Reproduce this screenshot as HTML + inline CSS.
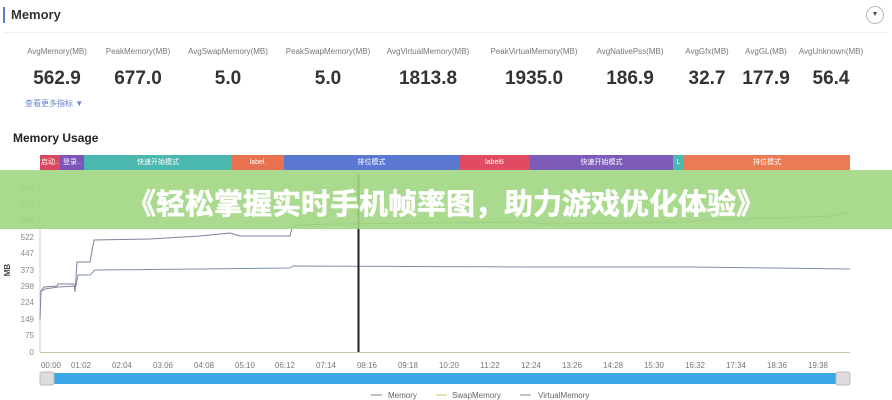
<!DOCTYPE html>
<html><head><meta charset="utf-8"><style>
*{margin:0;padding:0;box-sizing:border-box}
body{width:892px;height:400px;overflow:hidden;background:#fff;font-family:"Liberation Sans","Noto Sans CJK SC",sans-serif;position:relative;color:#333}
.a{position:absolute;white-space:nowrap}
.lab{font-size:8px;color:#777;transform:translateX(-50%);top:47px}
.val{font-size:19px;font-weight:bold;color:#333;transform:translateX(-50%);top:68px}
.seg{position:absolute;top:155px;height:15px;color:#fff;font-size:7px;text-align:center;line-height:15px;overflow:hidden}
</style></head><body>
<div class="a" style="left:3px;top:7px;width:2px;height:16px;background:#5b7bd5"></div>
<div class="a" style="left:11px;top:7px;font-size:13px;font-weight:bold;color:#333">Memory</div>
<div class="a" style="left:4px;top:32px;width:884px;height:1px;background:#eee"></div>
<div class="a" style="left:866px;top:6px;width:18px;height:18px;border:1px solid #bbb;border-radius:50%;font-size:7px;color:#555;text-align:center;line-height:16px">▼</div>

<div class="a lab" style="left:57px">AvgMemory(MB)</div>
<div class="a lab" style="left:138px">PeakMemory(MB)</div>
<div class="a lab" style="left:228px">AvgSwapMemory(MB)</div>
<div class="a lab" style="left:328px">PeakSwapMemory(MB)</div>
<div class="a lab" style="left:428px">AvgVirtualMemory(MB)</div>
<div class="a lab" style="left:534px">PeakVirtualMemory(MB)</div>
<div class="a lab" style="left:630px">AvgNativePss(MB)</div>
<div class="a lab" style="left:707px">AvgGfx(MB)</div>
<div class="a lab" style="left:766px">AvgGL(MB)</div>
<div class="a lab" style="left:831px">AvgUnknown(MB)</div>
<div class="a val" style="left:57px">562.9</div>
<div class="a val" style="left:138px">677.0</div>
<div class="a val" style="left:228px">5.0</div>
<div class="a val" style="left:328px">5.0</div>
<div class="a val" style="left:428px">1813.8</div>
<div class="a val" style="left:534px">1935.0</div>
<div class="a val" style="left:630px">186.9</div>
<div class="a val" style="left:707px">32.7</div>
<div class="a val" style="left:766px">177.9</div>
<div class="a val" style="left:831px">56.4</div>
<div class="a" style="left:25px;top:98px;font-size:8px;color:#6b84c9">查看更多指标 ▼</div>
<div class="a" style="left:13px;top:131px;font-size:12px;font-weight:bold;color:#222">Memory Usage</div>

<div class="seg" style="left:40px;width:20px;background:#d9475e">启动..</div>
<div class="seg" style="left:60px;width:24px;background:#7d55b8">登录..</div>
<div class="seg" style="left:84px;width:148px;background:#4bb8b0">快速开始模式</div>
<div class="seg" style="left:232px;width:52px;background:#e8714f">label.</div>
<div class="seg" style="left:284px;width:175px;background:#5a78d2">排位模式</div>
<div class="seg" style="left:459px;width:71px;background:#e04b62">label6</div>
<div class="seg" style="left:530px;width:143px;background:#7c5bb9">快速开始模式</div>
<div class="seg" style="left:673px;width:11px;background:#4bb8b0">L</div>
<div class="seg" style="left:684px;width:166px;background:#ec7a55">排位模式</div>

<svg class="a" style="left:0;top:0" width="892" height="400">
<g font-size="8" fill="#888" font-family="Liberation Sans" text-anchor="end">
<text x="34" y="191">745</text><text x="34" y="207">671</text><text x="34" y="223">596</text><text x="34" y="240">522</text><text x="34" y="256">447</text><text x="34" y="273">373</text><text x="34" y="289">298</text><text x="34" y="305">224</text><text x="34" y="322">149</text><text x="34" y="338">75</text><text x="34" y="355">0</text>
</g>
<text x="10" y="270" font-size="8" font-weight="bold" fill="#444" transform="rotate(-90 10 270)" text-anchor="middle" font-family="Liberation Sans">MB</text>
<line x1="40" y1="180" x2="40" y2="352" stroke="#ccc"/>
<line x1="40" y1="352.5" x2="850" y2="352.5" stroke="#c8c8a0"/>
<g font-size="8" fill="#777" font-family="Liberation Sans" text-anchor="middle">
<text x="51" y="368">00:00</text><text x="81" y="368">01:02</text><text x="122" y="368">02:04</text><text x="163" y="368">03:06</text><text x="204" y="368">04:08</text><text x="245" y="368">05:10</text><text x="285" y="368">06:12</text><text x="326" y="368">07:14</text><text x="367" y="368">08:16</text><text x="408" y="368">09:18</text><text x="449" y="368">10:20</text><text x="490" y="368">11:22</text><text x="531" y="368">12:24</text><text x="572" y="368">13:26</text><text x="613" y="368">14:28</text><text x="654" y="368">15:30</text><text x="695" y="368">16:32</text><text x="736" y="368">17:34</text><text x="777" y="368">18:36</text><text x="818" y="368">19:38</text>
</g>
<polyline fill="none" stroke="#8a7a9a" stroke-width="1" points="40,320 41,291 44,287 57,286 58,284 74,284 75,292 77,262 90,262 92,251 94,240 150,239 200,236 230,233 240,236 290,236 292,228"/>
<polyline fill="none" stroke="#7a9a6a" stroke-width="1" points="292,228 300,225 330,224 430,223 530,222 540,224 690,222 700,220 780,218 830,216 850,212"/>
<polyline fill="none" stroke="#7f8faa" stroke-width="1" points="40,292 45,289 58,287 76,286 78,275 90,275 95,270 200,269 290,268 293,266 530,267 690,267 850,269"/>
<line x1="358.5" y1="175" x2="358.5" y2="352" stroke="#222" stroke-width="2"/>
<rect x="40" y="373" width="810" height="11" fill="#3aa6e6"/>
<rect x="40" y="372" width="14" height="13" rx="2" fill="#ddd" stroke="#bbb"/>
<rect x="836" y="372" width="14" height="13" rx="2" fill="#ddd" stroke="#bbb"/>
<g font-size="8" fill="#666" font-family="Liberation Sans">
<line x1="371" y1="395" x2="382" y2="395" stroke="#8a7a9a"/><text x="388" y="398">Memory</text>
<line x1="436" y1="395" x2="447" y2="395" stroke="#b8c878"/><text x="452" y="398">SwapMemory</text>
<line x1="520" y1="395" x2="531" y2="395" stroke="#7f8faa"/><text x="538" y="398">VirtualMemory</text>
</g>
</svg>

<div class="a" style="left:0;top:170px;width:892px;height:59px;background:rgba(160,214,130,0.9)"></div>
<div class="a" style="left:0;top:181px;width:892px;text-align:center;font-size:29px;font-weight:bold;color:#fff;-webkit-text-stroke:0.6px #fff;font-family:'Liberation Sans','Noto Sans CJK SC',sans-serif">《轻松掌握实时手机帧率图，助力游戏优化体验》</div>
</body></html>
